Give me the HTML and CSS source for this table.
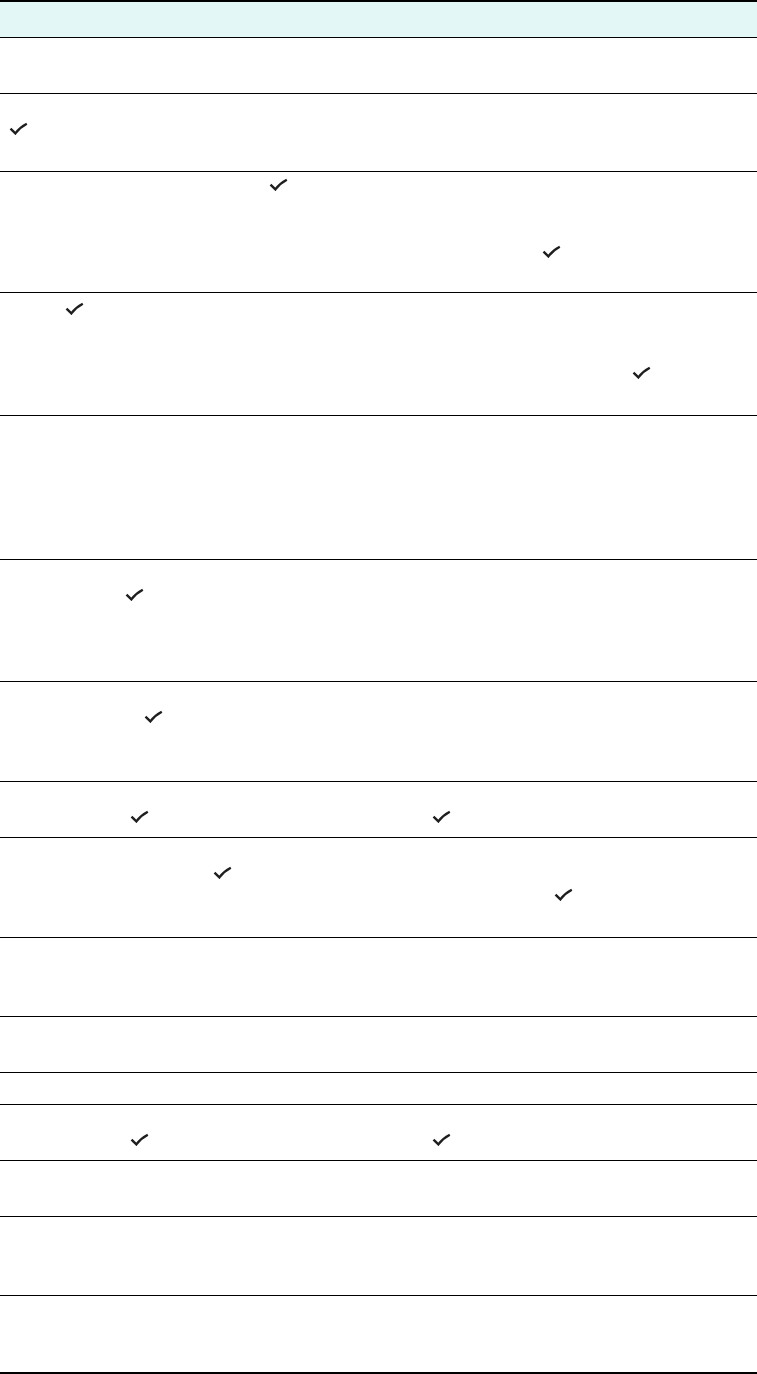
FILE: index.html
```html
<!DOCTYPE html>
<html lang="en">
<head>
<meta charset="utf-8">
<title>Table</title>
<link rel="stylesheet" href="styles.css">
</head>
<body>
<div class="table">
  <div class="row head h38"></div>
  <div class="row h56"></div>
  <div class="row h78">
    <div class="line"></div>
    <div class="line"><span class="ck" style="margin-left:9px"><svg viewBox="0 0 19 13"><path d="M1.5 6.6 L6.4 11.4 C9.2 7.6 13.2 4.2 17.8 1.8"/></svg></span></div>
  </div>
  <div class="row h121">
    <div class="line"><span class="ck" style="margin-left:269px"><svg viewBox="0 0 19 13"><path d="M1.5 6.6 L6.4 11.4 C9.2 7.6 13.2 4.2 17.8 1.8"/></svg></span></div>
    <div class="line"></div>
    <div class="line"></div>
    <div class="line"><span class="ck" style="margin-left:542px"><svg viewBox="0 0 19 13"><path d="M1.5 6.6 L6.4 11.4 C9.2 7.6 13.2 4.2 17.8 1.8"/></svg></span></div>
  </div>
  <div class="row h123">
    <div class="line"><span class="ck low" style="margin-left:65px"><svg viewBox="0 0 19 13"><path d="M1.5 6.6 L6.4 11.4 C9.2 7.6 13.2 4.2 17.8 1.8"/></svg></span></div>
    <div class="line"></div>
    <div class="line"></div>
    <div class="line"><span class="ck" style="margin-left:632px"><svg viewBox="0 0 19 13"><path d="M1.5 6.6 L6.4 11.4 C9.2 7.6 13.2 4.2 17.8 1.8"/></svg></span></div>
  </div>
  <div class="row h144"></div>
  <div class="row h122">
    <div class="line"></div>
    <div class="line"><span class="ck" style="margin-left:125px"><svg viewBox="0 0 19 13"><path d="M1.5 6.6 L6.4 11.4 C9.2 7.6 13.2 4.2 17.8 1.8"/></svg></span></div>
  </div>
  <div class="row h100">
    <div class="line"></div>
    <div class="line"><span class="ck" style="margin-left:144px"><svg viewBox="0 0 19 13"><path d="M1.5 6.6 L6.4 11.4 C9.2 7.6 13.2 4.2 17.8 1.8"/></svg></span></div>
  </div>
  <div class="row h56">
    <div class="line"></div>
    <div class="line"><span class="ck" style="margin-left:130px"><svg viewBox="0 0 19 13"><path d="M1.5 6.6 L6.4 11.4 C9.2 7.6 13.2 4.2 17.8 1.8"/></svg></span><span class="ck" style="margin-left:283px"><svg viewBox="0 0 19 13"><path d="M1.5 6.6 L6.4 11.4 C9.2 7.6 13.2 4.2 17.8 1.8"/></svg></span></div>
  </div>
  <div class="row h100">
    <div class="line"></div>
    <div class="line"><span class="ck" style="margin-left:213px"><svg viewBox="0 0 19 13"><path d="M1.5 6.6 L6.4 11.4 C9.2 7.6 13.2 4.2 17.8 1.8"/></svg></span></div>
    <div class="line"><span class="ck" style="margin-left:554px"><svg viewBox="0 0 19 13"><path d="M1.5 6.6 L6.4 11.4 C9.2 7.6 13.2 4.2 17.8 1.8"/></svg></span></div>
  </div>
  <div class="row h79"></div>
  <div class="row h56"></div>
  <div class="row h32"></div>
  <div class="row h56">
    <div class="line"></div>
    <div class="line"><span class="ck" style="margin-left:130px"><svg viewBox="0 0 19 13"><path d="M1.5 6.6 L6.4 11.4 C9.2 7.6 13.2 4.2 17.8 1.8"/></svg></span><span class="ck" style="margin-left:283px"><svg viewBox="0 0 19 13"><path d="M1.5 6.6 L6.4 11.4 C9.2 7.6 13.2 4.2 17.8 1.8"/></svg></span></div>
  </div>
  <div class="row h56"></div>
  <div class="row h79"></div>
  <div class="row last h78"></div>
</div>
</body>
</html>
```

FILE: styles.css
```css
html, body {
  margin: 0;
  padding: 0;
  background: #ffffff;
  font-family: "Liberation Sans", Arial, sans-serif;
}

.table {
  width: 757px;
  display: flex;
  flex-direction: column;
}

.row {
  box-sizing: border-box;
  border-bottom: 1px solid #000;
  padding-top: 5px;
  display: flex;
  flex-direction: column;
}

.head {
  background: #e2f7f6;
  border-top: 2px solid #000;
}

.last {
  border-bottom: 2px solid #000;
}

.line {
  height: 22.2px;
  display: flex;
  align-items: flex-start;
}

.ck {
  display: inline-flex;
  width: 19px;
  height: 13px;
  margin-top: 1px;
}

.ck.low {
  margin-top: 4px;
}

.ck svg {
  width: 19px;
  height: 13px;
  fill: none;
  stroke: #1e1e1e;
  stroke-width: 2.4;
  stroke-linejoin: miter;
  stroke-linecap: butt;
}

.h32 { height: 32px; }
.h38 { height: 38px; }
.h56 { height: 56px; }
.h78 { height: 78px; }
.h79 { height: 79px; }
.h100 { height: 100px; }
.h121 { height: 121px; }
.h122 { height: 122px; }
.h123 { height: 123px; }
.h144 { height: 144px; }
```
